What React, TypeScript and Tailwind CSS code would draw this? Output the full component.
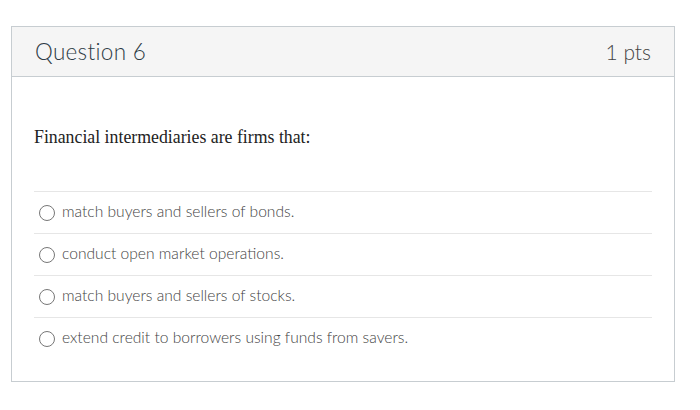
const answers = [
  'match buyers and sellers of bonds.',
  'conduct open market operations.',
  'match buyers and sellers of stocks.',
  'extend credit to borrowers using funds from savers.',
];

export default function App() {
  return (
    <div className="w-[700px] h-[410px] bg-white pt-[26px] pl-[11px]">
      <div className="w-[664px] border border-[#c7cdd1] bg-white">
        {/* шапка */}
        <div className="h-[50px] flex items-center justify-between px-[23px] bg-[#f5f5f5] border-b border-[#c7cdd1] font-['Lato',sans-serif] font-light text-[#2d3b45]">
          <span className="text-[22.5px] tracking-[0.3px]">Question 6</span>
          <span className="text-[21px] text-[#444]">1 pts</span>
        </div>

        <div className="px-[22px] pt-[48px] pb-[22px]">
          <p className="font-['Liberation_Serif',serif] text-[17.8px] leading-[24px] text-[#222] mb-[42px]">
            Financial intermediaries are firms that:
          </p>

          <div className="font-['Lato',sans-serif] font-light">
            {answers.map((a) => (
              <label
                key={a}
                className="h-[42px] flex items-center border-t border-[#e6e6e6] pl-[5px] pb-[2px] text-[15.6px] text-[#444] cursor-pointer"
              >
                <span className="w-[16px] h-[16px] rounded-full border-[1.5px] border-[#777] mr-[7px] mt-[3px] shrink-0" />
                {a}
              </label>
            ))}
          </div>
        </div>
      </div>
    </div>
  );
}
